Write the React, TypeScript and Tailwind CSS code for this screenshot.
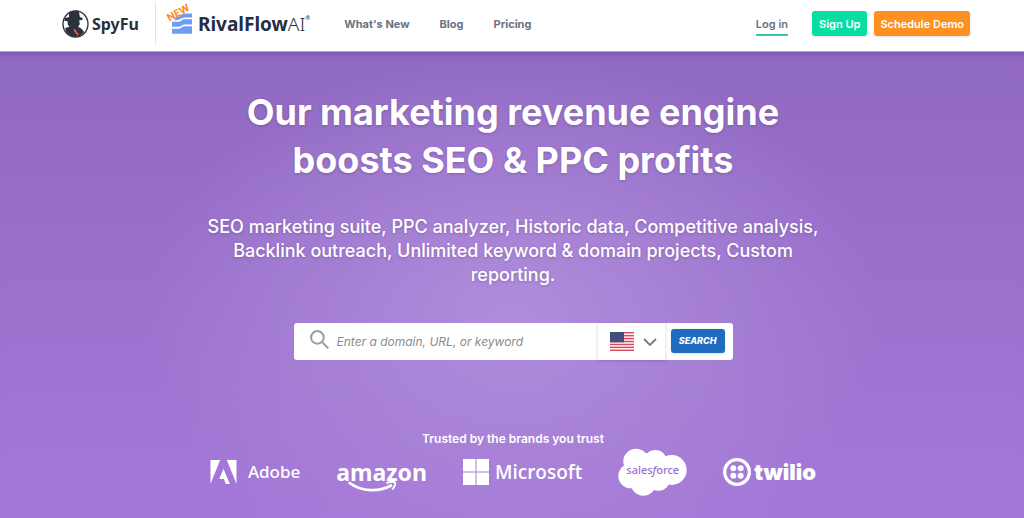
import React from "react";

function SpyLogo() {
  return (
    <svg viewBox="0 0 80 84" className="h-7 w-[27px]" aria-hidden="true">
      <ellipse cx="40" cy="42" rx="37.5" ry="39.5" fill="#fff" stroke="#2b303b" strokeWidth="4" />
      <path
        d="M20 8 Q32 0 50 3 L53 21 L62 25 L60 30 L51 31 L53 42 L48 50 L58 56 L66 66 Q54 81 38 81 Q20 78 11 64 L9 54 L22 50 L17 44 L16 34 L6 32 L9 24 L21 21 Z"
        fill="#2b303b"
      />
      <path d="M33 58 L41 58 L42 63 L50 73 L46 77 L38 67 Z" fill="#f0563a" />
    </svg>
  );
}

function RivalIcon() {
  return (
    <svg viewBox="0 0 60 62" className="h-[21px] w-5" fill="#6f9df2" aria-hidden="true">
      <path d="M8 12 C24 14 26 1 38 1 H60 V13 H40 C28 13 24 22 8 21 Z" />
      <path d="M0 26 H18 C28 26 30 18 38 18 H60 V34 H40 C30 34 28 41 18 41 H0 Z" />
      <path d="M0 47 H18 C28 47 30 39 38 39 H60 V62 H0 Z" />
    </svg>
  );
}

function Flag() {
  return (
    <svg viewBox="0 0 72 57" className="h-[19px] w-6" role="img" aria-label="United States">
      <rect width="72" height="57" fill="#fff" />
      {[0, 1, 2, 3, 4, 5, 6].map((n) => (
        <rect key={n} y={n * 8.8} width="72" height="4.4" fill="#d9475a" />
      ))}
      <rect width="42" height="31" fill="#414b7c" />
      {[6, 15, 24, 33].map((x) =>
        [6, 15, 24].map((y) => <circle key={`${x}-${y}`} cx={x} cy={y} r="1.2" fill="#8990b5" />)
      )}
    </svg>
  );
}

function Brands() {
  return (
    <div className="flex flex-wrap items-center justify-center gap-x-9 gap-y-4 text-white">
      <div className="flex items-center gap-[11px]">
        <svg viewBox="0 0 78 72" className="h-6 w-[27px]" fill="currentColor" aria-hidden="true">
          <path d="M0 0H29L0 72ZM49 0H78V72ZM39 26L58 72H46L40 57H26Z" />
        </svg>
        <span className="font-['Noto_Sans',sans-serif] text-[17px] leading-6 font-medium">Adobe</span>
      </div>
      <div className="relative">
        <span className="block font-['Noto_Sans',sans-serif] text-[23px] leading-8 font-bold">amazon</span>
        <svg viewBox="0 0 144 36" className="absolute top-[25px] left-3 h-3 w-12" fill="none" stroke="currentColor" aria-hidden="true">
          <path d="M2 4C42 35 96 33 132 12" strokeWidth="8" />
          <path d="M115 6C128 2 139 2 141 5C143 9 138 19 133 26" strokeWidth="6" />
        </svg>
      </div>
      <div className="flex items-center gap-1.5">
        <svg viewBox="0 0 26 26" className="size-[26px]" fill="currentColor" aria-hidden="true">
          <path d="M0 0H12.5V12.5H0ZM13.5 0H26V12.5H13.5ZM0 13.5H12.5V26H0ZM13.5 13.5H26V26H13.5Z" />
        </svg>
        <span className="font-['Open_Sans',sans-serif] text-[19px] leading-6 font-semibold">Microsoft</span>
      </div>
      <div className="relative flex h-12 w-[69px] items-center justify-center">
        <svg viewBox="0 0 207 144" className="absolute inset-0 size-full" fill="currentColor" aria-hidden="true">
          <circle cx="54" cy="40" r="38" />
          <circle cx="112" cy="40" r="34" />
          <circle cx="161" cy="66" r="45" />
          <circle cx="38" cy="84" r="37" />
          <circle cx="76" cy="105" r="38" />
          <circle cx="121" cy="92" r="36" />
          <path d="M54 20L80 14L112 20L150 40V95L121 118L76 110L40 90Z" />
        </svg>
        <span className="relative pb-1 font-['Noto_Sans',sans-serif] text-[11px] leading-4 font-medium text-[#9a70cd]">
          sales<i>f</i>orce
        </span>
      </div>
      <div className="flex items-center gap-[3px]">
        <svg viewBox="0 0 84 84" className="size-7" fill="currentColor" aria-hidden="true">
          <circle cx="42" cy="42" r="37" fill="none" stroke="currentColor" strokeWidth="10" />
          <circle cx="31" cy="31" r="9" />
          <circle cx="53" cy="31" r="9" />
          <circle cx="31" cy="53" r="9" />
          <circle cx="53" cy="53" r="9" />
        </svg>
        <span className="font-['Inter',sans-serif] text-[22px] leading-7 font-black">twilio</span>
      </div>
    </div>
  );
}

export default function App() {
  return (
    <div className="flex min-h-screen flex-col bg-[#a378d6] font-['Inter',sans-serif]">
      <header className="flex items-center border-b border-[#b9a2d6] bg-white pt-0.5 pr-[54px] pb-1.5 pl-[62px]">
        <a href="#home" className="flex items-center gap-[3px] text-[#2b303b]">
          <SpyLogo />
          <span className="font-['Noto_Sans',sans-serif] text-base leading-6 font-bold">SpyFu</span>
        </a>
        <div className="ml-4 h-[43px] w-px bg-[#e2e2e9]" />
        <a href="#rivalflow" className="relative ml-4 flex items-center gap-1.5 text-[#262d3f]">
          <RivalIcon />
          <span className="absolute -top-1.5 -left-1.5 -rotate-30 text-[10px] leading-3 font-bold text-[#f78c20]">NEW</span>
          <span className="flex font-['Noto_Sans',sans-serif] text-[19px] leading-6 font-bold">
            RivalFlow<span className="font-light">AI</span>
            <span className="text-[6px] leading-3 font-normal">®</span>
          </span>
        </a>
        <nav className="ml-[34px] flex gap-[30px] text-[11px] leading-4 font-bold text-[#6b7280]">
          <a href="#new">What's New</a>
          <a href="#blog">Blog</a>
          <a href="#pricing">Pricing</a>
        </nav>
        <div className="ml-auto flex items-center text-[11px] leading-4 font-semibold text-[#6b7280]">
          <a href="#login" className="mr-6 border-b-2 border-[#35c9ac] pt-1 pb-0.5">Log in</a>
          <button className="mr-[7px] h-[25px] rounded-[3px] bg-[#06dfa0] px-[7px] text-white shadow-sm">Sign Up</button>
          <button className="h-[25px] rounded-[3px] bg-[#ff9120] px-1.5 text-white shadow-sm">Schedule Demo</button>
        </div>
      </header>
      <main className="flex flex-1 flex-col items-center bg-[radial-gradient(ellipse_370px_270px_at_50%_57%,#b08ddb_0%,#b08ddb00_100%),linear-gradient(#9069c2,#a478d8)] pt-9 pr-4 pb-5 pl-[18px] text-center text-white shadow-[inset_0_8px_8px_-8px_#6d4aa0]">
        <h1 className="max-w-[600px] text-4xl leading-12 font-bold [text-shadow:0_1px_3px_#00000030]">
          Our marketing revenue engine boosts SEO &amp; PPC profits
        </h1>
        <p className="mt-[31px] max-w-[620px] text-lg leading-6 font-medium [text-shadow:0_1px_3px_#00000030]">
          SEO marketing suite, PPC analyzer, Historic data, Competitive analysis, Backlink outreach, Unlimited keyword
          &amp; domain projects, Custom reporting.
        </p>
        <form className="mt-9 flex h-[37px] w-full max-w-[439px] items-center rounded-[3px] bg-white pr-2" onSubmit={(e) => e.preventDefault()}>
          <svg viewBox="0 0 54 54" className="mr-2 mb-1 ml-4 size-[19px] shrink-0" fill="none" stroke="#9aa0aa" strokeWidth="6" aria-hidden="true">
            <circle cx="21" cy="21" r="18" />
            <path d="M34 34L52 52" />
          </svg>
          <input aria-label="Search" placeholder="Enter a domain, URL, or keyword" className="min-w-0 flex-1 text-xs text-gray-700 italic outline-none placeholder:text-[#8c8c8c]" />
          <button type="button" aria-label="Country" className="flex h-full items-center gap-[9px] border-x border-[#ececf1] pr-2 pl-3 shadow-sm">
            <Flag />
            <svg viewBox="0 0 14 8" className="h-2 w-3.5" fill="none" stroke="#747b88" strokeWidth="1.8" aria-hidden="true">
              <path d="M1 1L7 7L13 1" />
            </svg>
          </button>
          <button type="submit" className="mb-0.5 ml-[5px] h-6 rounded-[3px] bg-[#1f6bc0] px-2 text-[9px] font-extrabold text-white italic shadow-sm">SEARCH</button>
        </form>
        <h2 className="mt-[71px] mb-px text-xs leading-4 font-semibold">Trusted by the brands you trust</h2>
        <Brands />
      </main>
    </div>
  );
}
